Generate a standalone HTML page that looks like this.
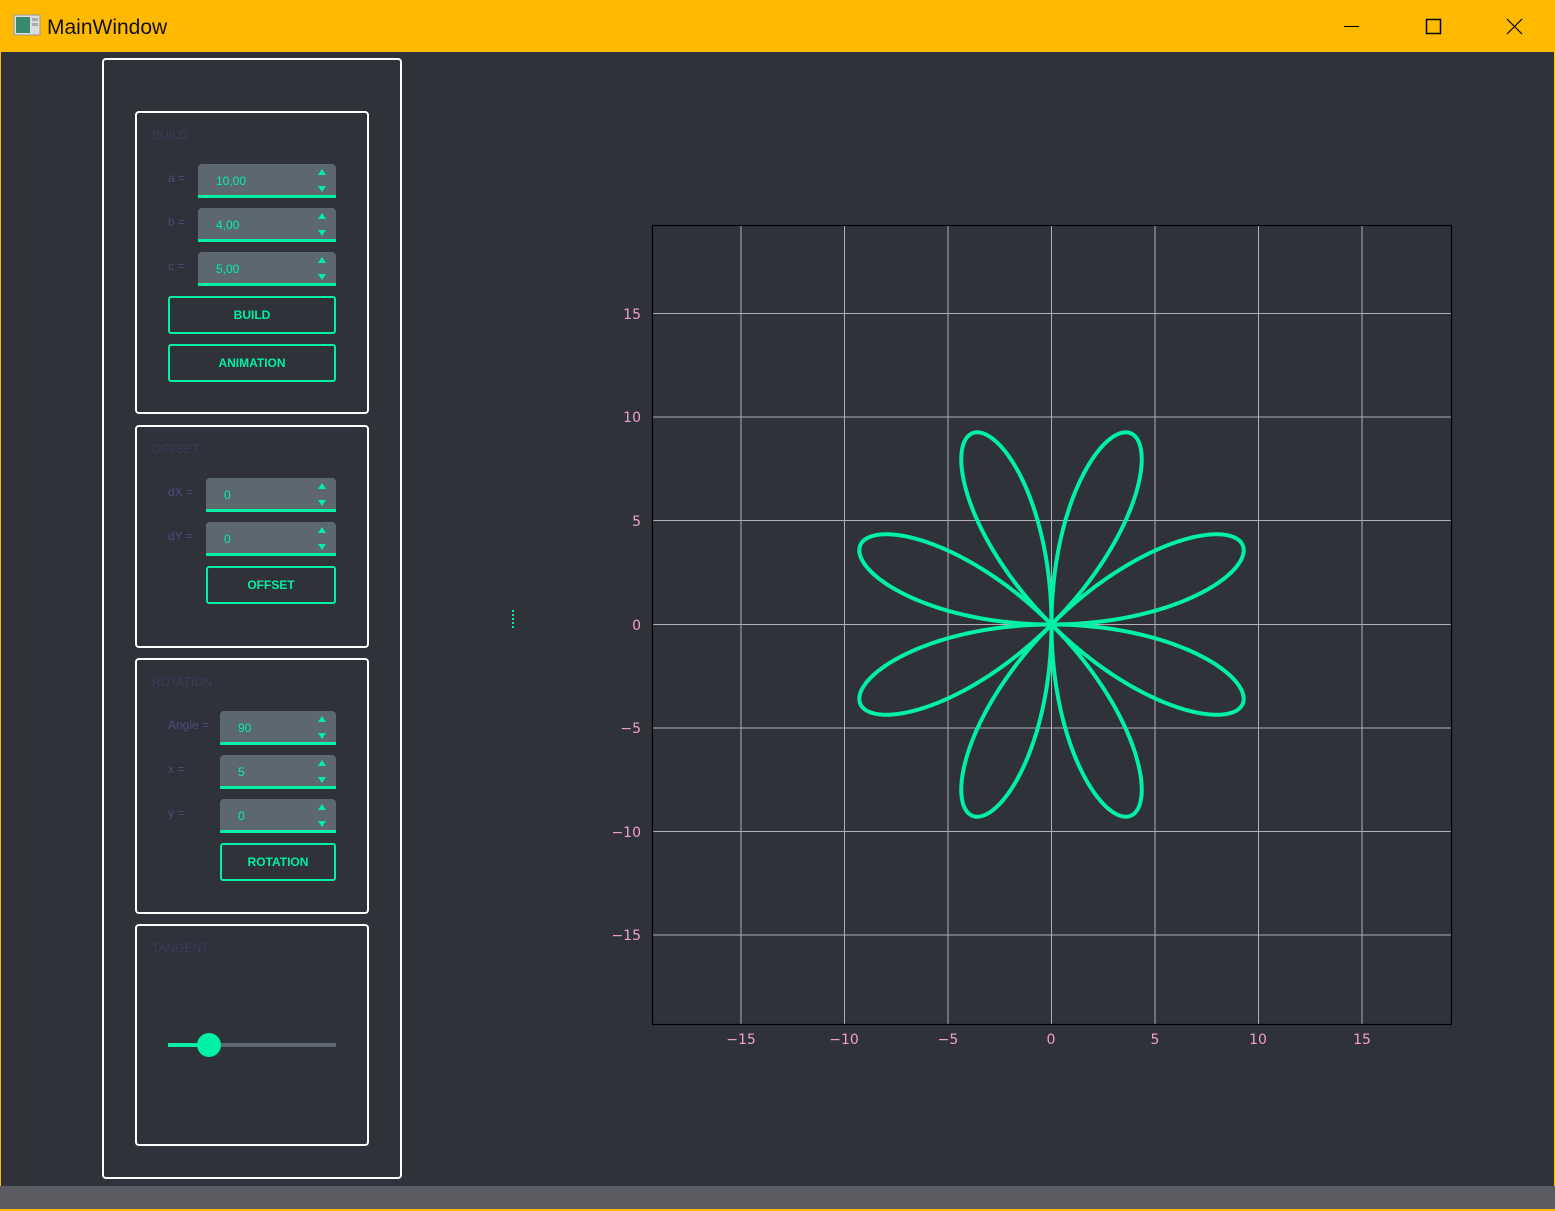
<!DOCTYPE html>
<html><head><meta charset="utf-8"><style>
*{margin:0;padding:0;box-sizing:border-box}
body{width:1555px;height:1211px;background:#2f323b;font-family:"Liberation Sans",sans-serif;position:relative;overflow:hidden}
.abs{position:absolute}
#title{left:0;top:0;width:1555px;height:52px;background:#ffb900}
#title .t{left:47px;top:16px;font-size:21px;color:#111;font-family:"Liberation Sans",sans-serif}
.box{position:absolute;border:2px solid #fff;border-radius:4px}
.gt{position:absolute;font-size:12px;color:#3a3d58}
.lbl{position:absolute;font-size:12px;color:#4a4d78}
.inp{position:absolute;height:34px;background:#5c6770;border-bottom:3px solid #00f0a8;border-radius:4px 4px 0 0;color:#00f0a8;font-size:12px;padding:10px 0 0 18px}
.inp:before{content:"";position:absolute;right:10px;top:5px;border-left:4px solid transparent;border-right:4px solid transparent;border-bottom:6px solid #00f0a8}
.inp:after{content:"";position:absolute;right:10px;bottom:3px;border-left:4px solid transparent;border-right:4px solid transparent;border-top:6px solid #00f0a8}
.btn{position:absolute;height:38px;border:2px solid #00f0a8;border-radius:3px;color:#00f0a8;font-size:12px;font-weight:bold;text-align:center;line-height:35px}
</style></head><body>
<div id="title" class="abs">
<svg class="abs" style="left:13px;top:14px" width="28" height="23"><rect x="1" y="1" width="26" height="20" fill="#ddd" stroke="#999"/><rect x="3" y="3" width="14" height="16" fill="#3a8a70"/><rect x="19" y="4" width="6" height="3" fill="#aaa"/><rect x="19" y="9" width="6" height="3" fill="#aaa"/></svg>
<div class="abs t">MainWindow</div>
<svg class="abs" style="left:1340px;top:16px" width="190" height="22"><line x1="4" y1="10.5" x2="19" y2="10.5" stroke="#000"/><rect x="86.5" y="3.5" width="14" height="14" fill="none" stroke="#000" stroke-width="1.5"/><path d="M167 3L182 18M182 3L167 18" stroke="#000" stroke-width="1.2"/></svg>
</div>
<div class="abs" style="left:0;top:52px;width:1px;height:1159px;background:#ffb900"></div>
<div class="abs" style="right:0;top:52px;width:1px;height:1159px;background:#ffb900"></div>
<div class="abs" style="left:0;top:1186px;width:1555px;height:25px;background:#5a5c61;border-bottom:2px solid #ffb900"></div>

<div class="box" style="left:102px;top:58px;width:300px;height:1121px"></div>

<div class="box" style="left:135px;top:111px;width:234px;height:303px"></div>
<div class="gt" style="left:152px;top:128px">BUILD</div>
<div class="lbl" style="left:168px;top:171px">a =</div>
<div class="inp" style="left:198px;top:164px;width:138px">10,00</div>
<div class="lbl" style="left:168px;top:215px">b =</div>
<div class="inp" style="left:198px;top:208px;width:138px">4,00</div>
<div class="lbl" style="left:168px;top:259px">c =</div>
<div class="inp" style="left:198px;top:252px;width:138px">5,00</div>
<div class="btn" style="left:168px;top:296px;width:168px">BUILD</div>
<div class="btn" style="left:168px;top:344px;width:168px">ANIMATION</div>

<div class="box" style="left:135px;top:425px;width:234px;height:223px"></div>
<div class="gt" style="left:152px;top:442px">OFFSET</div>
<div class="lbl" style="left:168px;top:485px">dX =</div>
<div class="inp" style="left:206px;top:478px;width:130px">0</div>
<div class="lbl" style="left:168px;top:529px">dY =</div>
<div class="inp" style="left:206px;top:522px;width:130px">0</div>
<div class="btn" style="left:206px;top:566px;width:130px">OFFSET</div>

<div class="box" style="left:135px;top:658px;width:234px;height:256px"></div>
<div class="gt" style="left:152px;top:675px">ROTATION</div>
<div class="lbl" style="left:168px;top:718px">Angle =</div>
<div class="inp" style="left:220px;top:711px;width:116px">90</div>
<div class="lbl" style="left:168px;top:762px">x =</div>
<div class="inp" style="left:220px;top:755px;width:116px">5</div>
<div class="lbl" style="left:168px;top:806px">y =</div>
<div class="inp" style="left:220px;top:799px;width:116px">0</div>
<div class="btn" style="left:220px;top:843px;width:116px">ROTATION</div>

<div class="box" style="left:135px;top:924px;width:234px;height:222px"></div>
<div class="gt" style="left:152px;top:941px">TANGENT</div>
<div class="abs" style="left:168px;top:1043px;width:168px;height:4px;background:#5c6770"></div>
<div class="abs" style="left:168px;top:1043px;width:40px;height:4px;background:#00f0a8"></div>
<div class="abs" style="left:197px;top:1033px;width:24px;height:24px;border-radius:50%;background:#00f0a8"></div>

<div class="abs" style="left:512px;top:610px;width:0;height:18px;border-left:2px dotted #00f0a8"></div>

<svg class="abs" style="left:0;top:0" width="1555" height="1211" font-family="DejaVu Sans, sans-serif" font-size="14" fill="#f0a0c8">
<g stroke="#b0b0b0" stroke-width="1">
<line x1="741" y1="225" x2="741" y2="1024"/><line x1="844.5" y1="225" x2="844.5" y2="1024"/><line x1="948" y1="225" x2="948" y2="1024"/><line x1="1051.5" y1="225" x2="1051.5" y2="1024"/><line x1="1155" y1="225" x2="1155" y2="1024"/><line x1="1258.5" y1="225" x2="1258.5" y2="1024"/><line x1="1362" y1="225" x2="1362" y2="1024"/>
<line x1="652" y1="313.5" x2="1451" y2="313.5"/><line x1="652" y1="417" x2="1451" y2="417"/><line x1="652" y1="520.5" x2="1451" y2="520.5"/><line x1="652" y1="624.5" x2="1451" y2="624.5"/><line x1="652" y1="728" x2="1451" y2="728"/><line x1="652" y1="831.5" x2="1451" y2="831.5"/><line x1="652" y1="935" x2="1451" y2="935"/>
</g>
<rect x="652.5" y="225.5" width="799" height="799" fill="none" stroke="#000" stroke-width="1.2"/>
<path id="rose" fill="none" stroke="#00f0a8" stroke-width="4" d=""/>
<g text-anchor="middle">
<text x="741" y="1044">−15</text><text x="844" y="1044">−10</text><text x="948" y="1044">−5</text><text x="1051" y="1044">0</text><text x="1155" y="1044">5</text><text x="1258" y="1044">10</text><text x="1362" y="1044">15</text>
</g>
<g text-anchor="end">
<text x="641" y="319">15</text><text x="641" y="422">10</text><text x="641" y="526">5</text><text x="641" y="630">0</text><text x="641" y="733">−5</text><text x="641" y="837">−10</text><text x="641" y="940">−15</text>
</g>
</svg>
<script>
var d="",cx=1051.5,cy=624.5,s=20.7;
for(var i=0;i<=2000;i++){var t=i/2000*2*Math.PI;var r=10*Math.cos(4*(t-Math.PI/8));var x=cx+s*r*Math.cos(t),y=cy-s*r*Math.sin(t);d+=(i?"L":"M")+x.toFixed(2)+" "+y.toFixed(2);}
document.getElementById("rose").setAttribute("d",d);
</script>
</body></html>
